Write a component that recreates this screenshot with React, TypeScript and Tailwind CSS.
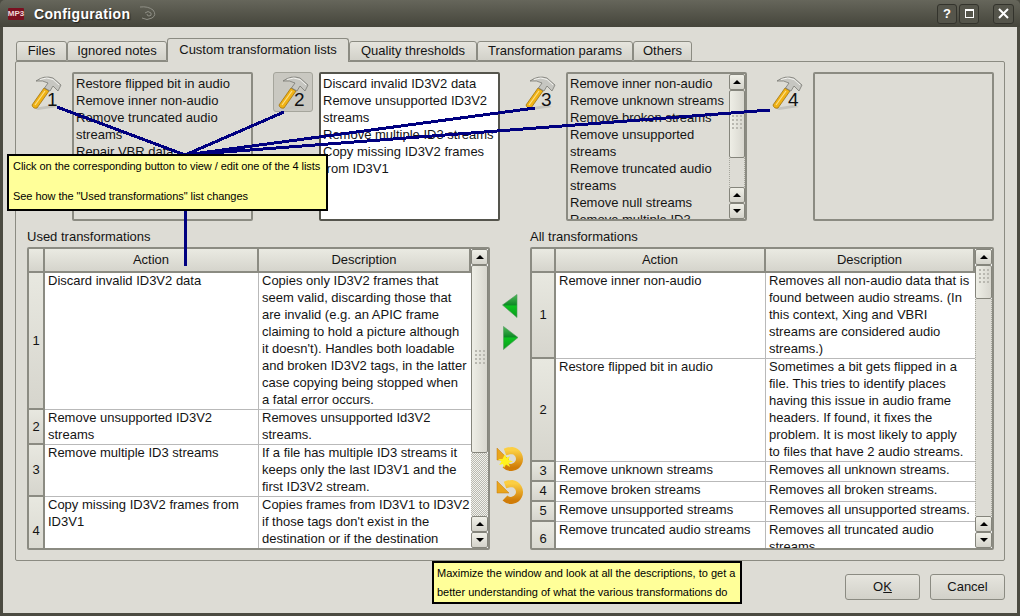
import React from 'react';

type Row = {
  id: number;
  action: string;
  description: string;
  height: number;
};

const usedRows: Row[] = [
  {
    id: 1,
    action: 'Discard invalid ID3V2 data',
    description:
      "Copies only ID3V2 frames that\nseem valid, discarding those that\nare invalid (e.g. an APIC frame\nclaiming to hold a picture although\nit doesn't). Handles both loadable\nand broken ID3V2 tags, in the latter\ncase copying being stopped when\na fatal error occurs.",
    height: 137,
  },
  {
    id: 2,
    action: 'Remove unsupported ID3V2\nstreams',
    description: 'Removes unsupported Id3V2\nstreams.',
    height: 35,
  },
  {
    id: 3,
    action: 'Remove multiple ID3 streams',
    description:
      'If a file has multiple ID3 streams it\nkeeps only the last ID3V1 and the\nfirst ID3V2 stream.',
    height: 52,
  },
  {
    id: 4,
    action: 'Copy missing ID3V2 frames from\nID3V1',
    description:
      "Copies frames from ID3V1 to ID3V2\nif those tags don't exist in the\ndestination or if the destination\nlacks them.",
    height: 70,
  },
];

const allRows: Row[] = [
  {
    id: 1,
    action: 'Remove inner non-audio',
    description:
      'Removes all non-audio data that is\nfound between audio streams. (In\nthis context, Xing and VBRI\nstreams are considered audio\nstreams.)',
    height: 86,
  },
  {
    id: 2,
    action: 'Restore flipped bit in audio',
    description:
      'Sometimes a bit gets flipped in a\nfile. This tries to identify places\nhaving this issue in audio frame\nheaders. If found, it fixes the\nproblem. It is most likely to apply\nto files that have 2 audio streams.',
    height: 103,
  },
  { id: 3, action: 'Remove unknown streams', description: 'Removes all unknown streams.', height: 20 },
  { id: 4, action: 'Remove broken streams', description: 'Removes all broken streams.', height: 20 },
  { id: 5, action: 'Remove unsupported streams', description: 'Removes all unsupported streams.', height: 20 },
  {
    id: 6,
    action: 'Remove truncated audio streams',
    description: 'Removes all truncated audio\nstreams.',
    height: 35,
  },
];

const tabs = [
  { label: 'Files', width: 'w-[51px]' },
  { label: 'Ignored notes', width: 'w-[100px]' },
  { label: 'Custom transformation lists', width: 'w-[182px]', active: true },
  { label: 'Quality thresholds', width: 'w-[128px]' },
  { label: 'Transformation params', width: 'w-[156px]' },
  { label: 'Others', width: 'w-[59px]' },
];

function Hammer({ n }: { n: number }) {
  return (
    <svg width="40" height="40" viewBox="0 0 40 40">
      <path d="M8 36 L26 33 L32 35 L12 38 Z" fill="#c4c3bc" />
      <path d="M6 33 L18 16 L23 19 L11 36 Q7 37 6 33 Z" fill="#f0b215" stroke="#a07410" strokeWidth="0.8" />
      <path d="M9 33 L19 19" stroke="#fbe08a" strokeWidth="1.2" />
      <path
        d="M10 9 Q18 3 27 6 L35 13 L32 19 L27 14 L24 19 L18.5 16 L22 11 Q17 8 10 9 Z"
        fill="#c6c6c1"
        stroke="#6f6f68"
        strokeWidth="0.7"
      />
      <path d="M14 7.5 Q21 4.5 27 7.5 L33 13" stroke="#f4f4f0" strokeWidth="1" fill="none" />
      <text x="21" y="34" fontSize="19" fontFamily="Liberation Sans, sans-serif" fill="#111">
        {n}
      </text>
    </svg>
  );
}

function Refresh({ star }: { star?: boolean }) {
  const id = star ? 'rf-star' : 'rf-plain';
  return (
    <svg width="28" height="27" viewBox="0 0 28 27">
      <defs>
        <linearGradient id={id} x1="0" y1="0" x2="0" y2="1">
          <stop offset="0" stopColor="#fbce42" />
          <stop offset="1" stopColor="#d07c08" />
        </linearGradient>
      </defs>
      <path d="M9 6 Q13 4.5 16 4.5 A8.5 8.5 0 1 1 9 19" fill="none" stroke={`url(#${id})`} strokeWidth="7" />
      <path d="M1 2 L1 14 L13 14 Z" fill="#e9a51c" stroke="#c47a0a" strokeWidth="0.5" />
      {star && (
        <path
          d="M9 8 L10.5 12 L14 10 L12.5 14 L17 15.5 L12.5 17 L14 21 L10 18.5 L8 22 L7 18 L3 19 L5.5 15.5 L2 13 L6.5 13 Z"
          fill="#fff21e"
        />
      )}
    </svg>
  );
}

function GreenArrow({ dir }: { dir: 'left' | 'right' }) {
  const id = dir === 'left' ? 'ga-left' : 'ga-right';
  return (
    <svg width="17" height="24" viewBox="0 0 17 24">
      <defs>
        <linearGradient id={id} x1="0" y1="0" x2="0" y2="1">
          <stop offset="0" stopColor="#4fb85a" />
          <stop offset="0.45" stopColor="#0f8a26" />
          <stop offset="0.5" stopColor="#0cc220" />
          <stop offset="1" stopColor="#0a9a1c" />
        </linearGradient>
      </defs>
      {dir === 'left' ? (
        <path d="M0.5 11 L15 0.5 L15 23.5 Z" fill={`url(#${id})`} stroke="#4f9a5a" strokeWidth="0.6" />
      ) : (
        <path d="M16 11.5 L1.5 0.5 L1.5 23.5 Z" fill={`url(#${id})`} stroke="#4f9a5a" strokeWidth="0.6" />
      )}
    </svg>
  );
}

function ScrollButton({ up }: { up?: boolean }) {
  return (
    <div className="h-[16px] shrink-0 flex items-center justify-center rounded-[2px] border border-[#85857c] bg-gradient-to-b from-[#f0f0e8] to-[#d4d3cb]">
      <div
        className={
          up
            ? 'w-0 h-0 border-x-[4px] border-x-transparent border-b-[4px] border-b-black'
            : 'w-0 h-0 border-x-[4px] border-x-transparent border-t-[4px] border-t-black'
        }
      />
    </div>
  );
}

function Grip() {
  return (
    <div className="grid grid-cols-3 gap-[2px]">
      {Array.from({ length: 12 }).map((_, i) => (
        <div key={i} className="w-[2px] h-[2px] bg-[#b9b8b0]" />
      ))}
    </div>
  );
}

function Scrollbar({
  thumb,
  width,
  dense,
  gripTop,
}: {
  thumb: number;
  width: string;
  dense?: boolean;
  gripTop: number;
}) {
  return (
    <div className={`${width} shrink-0 flex flex-col`}>
      <ScrollButton up />
      <div
        className="shrink-0 flex flex-col items-center rounded-[2px] border border-[#85857c] bg-gradient-to-r from-[#eeeee6] to-[#d8d7cf]"
        style={{ height: thumb, paddingTop: gripTop }}
      >
        <Grip />
      </div>
      <div
        className={
          dense
            ? 'flex-1 bg-[repeating-conic-gradient(#b8b8b0_0_25%,#f2f2ec_0_50%)] bg-[length:2px_2px]'
            : 'flex-1 border-x border-dotted border-[#a5a59c] bg-[#dddcd5]'
        }
      />
      <ScrollButton up />
      <ScrollButton />
    </div>
  );
}

function DataTable({
  rows,
  headerWidth,
  actionWidth,
  descWidth,
  thumb,
  dense,
  gripTop,
}: {
  rows: Row[];
  headerWidth: string;
  actionWidth: string;
  descWidth: string;
  thumb: number;
  dense?: boolean;
  gripTop: number;
}) {
  const headerCell =
    'flex items-center justify-center border-r-2 border-b-2 border-[#8b8b82] bg-gradient-to-b from-[#eaeae2] to-[#d5d4cc]';
  return (
    <div className="h-[303px] flex rounded-[2px] border-2 border-[#8b8b82] bg-white overflow-hidden">
      <div className="flex-1 min-w-0 flex flex-col overflow-hidden">
        <div className="h-[24px] shrink-0 flex">
          <div className={`${headerWidth} ${headerCell}`} />
          <div className={`${actionWidth} ${headerCell}`}>Action</div>
          <div className={`${descWidth} ${headerCell}`}>Description</div>
        </div>
        {rows.map((row) => (
          <div key={row.id} className="shrink-0 flex" style={{ height: row.height }}>
            <div
              className={`${headerWidth} shrink-0 flex items-center justify-center border-r-2 border-b-2 border-[#8b8b82] bg-gradient-to-b from-[#e8e8e0] to-[#d6d5cd]`}
            >
              {row.id}
            </div>
            <div className={`${actionWidth} shrink-0 pl-[3px] border-r border-b border-[#b9b9b9] overflow-hidden`}>
              <div className="-mt-px whitespace-pre leading-[17px]">{row.action}</div>
            </div>
            <div className={`${descWidth} shrink-0 pl-[3px] border-b border-[#b9b9b9] overflow-hidden`}>
              <div className="-mt-px whitespace-pre leading-[17px]">{row.description}</div>
            </div>
          </div>
        ))}
      </div>
      <Scrollbar thumb={thumb} width="w-[17px]" dense={dense} gripTop={gripTop} />
    </div>
  );
}

function ListBox({ lines, white, children }: { lines: string[]; white?: boolean; children?: React.ReactNode }) {
  return (
    <div
      className={
        white
          ? 'w-[181px] h-[149px] flex rounded-[2px] border-2 border-[#55554d] bg-white overflow-hidden'
          : 'w-[181px] h-[149px] flex rounded-[2px] border-2 border-[#8b8b82] overflow-hidden'
      }
    >
      <div className="flex-1 min-w-0 pl-[2px] pt-px leading-[17px] whitespace-pre">
        {lines.map((line) => (
          <div key={line}>{line}</div>
        ))}
      </div>
      {children}
    </div>
  );
}

function App() {
  return (
    <div className="relative w-[1020px] h-[616px] flex flex-col overflow-hidden bg-[#4b4b41] font-['Liberation_Sans',sans-serif] text-[13px] text-[#141414]">
      {/* title bar */}
      <div className="h-[27px] shrink-0 flex items-center pl-[8px] pr-[6px] rounded-t-[5px] bg-gradient-to-b from-[#66665b] to-[#45453b]">
        <div className="w-[16px] h-[12px] flex items-center justify-center rounded-[1px] bg-[#7a1020] text-[8px] leading-none font-bold text-[#f0d8d8]">
          MP3
        </div>
        <div className="ml-[10px] mt-px text-[14px] font-bold tracking-[0.35px] text-white [text-shadow:1px_1px_1px_#222]">
          Configuration
        </div>
        <svg className="ml-[9px]" width="18" height="16" viewBox="0 0 18 16" fill="none" stroke="#8f8f86" strokeWidth="1">
          <path d="M1 1 Q9 0 14 4 Q18 9 13 12 Q8 15 3 12" />
          <path d="M6 7 Q9 4 12 7 Q13 10 10 10 Q8 10 8 8" />
        </svg>
        <div className="flex-1" />
        <div className="flex items-center">
          <div className="w-[20px] h-[20px] flex items-center justify-center rounded-[3px] border border-[#33332c] bg-[#55554b] text-[13px] font-bold text-white">
            ?
          </div>
          <div className="ml-[2px] w-[20px] h-[20px] flex items-center justify-center rounded-[3px] border border-[#33332c] bg-[#55554b]">
            <div className="w-[9px] h-[9px] border border-t-2 border-white" />
          </div>
          <div className="ml-[14px] w-[21px] h-[20px] flex items-center justify-center rounded-[3px] border border-[#33332c] bg-[#55554b]">
            <svg width="11" height="11" viewBox="0 0 11 11" stroke="white" strokeWidth="2">
              <path d="M1 1 L10 10 M10 1 L1 10" />
            </svg>
          </div>
        </div>
      </div>

      {/* window body */}
      <div className="flex-1 mx-[3px] mb-[3px] flex flex-col px-[12px] pt-[11px] bg-[#dddcd5]">
        <div className="h-[23px] shrink-0 flex items-end pl-px">
          {tabs.map((tab) =>
            tab.active ? (
              <div
                key={tab.label}
                className={`${tab.width} h-[24px] -mb-px pb-[2px] z-10 flex items-center justify-center rounded-t-[3px] border border-b-0 border-[#8b8b82] bg-[#dddcd5]`}
              >
                {tab.label}
              </div>
            ) : (
              <div
                key={tab.label}
                className={`${tab.width} h-[20px] flex items-center justify-center rounded-t-[3px] border border-[#8b8b82] bg-gradient-to-b from-[#e6e5de] to-[#d2d1c9]`}
              >
                {tab.label}
              </div>
            ),
          )}
        </div>

        <div className="h-[500px] shrink-0 pl-[10px] pr-[9px] pt-[10px] rounded-[2px] border border-[#8b8b82]">
          <div className="flex">
            <div className="w-[40px] h-[40px] mr-[6px]">
              <Hammer n={1} />
            </div>
            <ListBox
              lines={[
                'Restore flipped bit in audio',
                'Remove inner non-audio',
                'Remove truncated audio',
                'streams',
                'Repair VBR data',
              ]}
            />
            <div className="w-[40px] h-[40px] ml-[20px] mr-[6px] rounded-[3px] border border-[#a5a59c] bg-[#c9c8c1]">
              <div className="-m-px">
                <Hammer n={2} />
              </div>
            </div>
            <ListBox
              white
              lines={[
                'Discard invalid ID3V2 data',
                'Remove unsupported ID3V2',
                'streams',
                'Remove multiple ID3 streams',
                'Copy missing ID3V2 frames',
                'from ID3V1',
              ]}
            />
            <div className="w-[40px] h-[40px] ml-[20px] mr-[6px]">
              <Hammer n={3} />
            </div>
            <ListBox
              lines={[
                'Remove inner non-audio',
                'Remove unknown streams',
                'Remove broken streams',
                'Remove unsupported',
                'streams',
                'Remove truncated audio',
                'streams ',
                'Remove null streams',
                'Remove multiple ID3',
              ]}
            >
              <Scrollbar thumb={68} width="w-[16px]" gripTop={24} />
            </ListBox>
            <div className="w-[40px] h-[40px] ml-[20px] mr-[6px]">
              <Hammer n={4} />
            </div>
            <ListBox lines={[]} />
          </div>

          <div className="flex ml-px mt-[8px]">
            <div className="w-[463px]">
              <div className="h-[18px] leading-[15px]">Used transformations</div>
              <DataTable
                rows={usedRows}
                headerWidth="w-[16px]"
                actionWidth="w-[214px]"
                descWidth="w-[212px]"
                thumb={188}
                dense
                gripTop={84}
              />
            </div>
            <div className="w-[40px] flex flex-col items-center pt-[65px]">
              <GreenArrow dir="left" />
              <div className="mt-[8px]">
                <GreenArrow dir="right" />
              </div>
              <div className="mt-[96px]">
                <Refresh star />
              </div>
              <div className="mt-[6px]">
                <Refresh />
              </div>
            </div>
            <div className="w-[464px]">
              <div className="h-[18px] leading-[15px]">All transformations</div>
              <DataTable
                rows={allRows}
                headerWidth="w-[24px]"
                actionWidth="w-[210px]"
                descWidth="w-[209px]"
                thumb={34}
                gripTop={3}
              />
            </div>
          </div>
        </div>

        <div className="flex justify-end gap-[10px] pt-[13px]">
          <div className="w-[75px] h-[26px] flex items-center justify-center rounded-[3px] border border-[#8b8b82] bg-gradient-to-b from-[#e6e5de] to-[#d2d1c9]">
            <span>
              O<span className="underline">K</span>
            </span>
          </div>
          <div className="w-[75px] h-[26px] flex items-center justify-center rounded-[3px] border border-[#8b8b82] bg-gradient-to-b from-[#e6e5de] to-[#d2d1c9]">
            Cancel
          </div>
        </div>
      </div>

      {/* annotation lines */}
      <svg className="absolute left-0 top-0" width="1020" height="616" shapeRendering="crispEdges" stroke="#000080" strokeWidth="3">
        <path d="M57 107 L185 155" />
        <path d="M284 112 L185 155" />
        <path d="M535 108 L185 155" />
        <path d="M770 110 L185 155" />
        <path d="M185 205 L185 266" />
      </svg>

      {/* annotation notes */}
      <div className="absolute left-[7px] top-[154px] w-[321px] h-[57px] pl-[4px] pt-[3px] border-2 border-black bg-[#ffff99] text-[11px] leading-[15px] tracking-[-0.06px] whitespace-nowrap text-black">
        <div>Click on the corresponding button to view / edit one of the 4 lists</div>
        <div className="mt-[15px]">See how the "Used transformations" list changes</div>
      </div>
      <div className="absolute left-[432px] top-[561px] w-[310px] h-[43px] pl-[3px] pt-px border-2 border-black bg-[#ffff99] text-[11px] leading-[19px] whitespace-nowrap text-black">
        <div>Maximize the window and look at all the descriptions, to get a</div>
        <div>better understanding of what the various transformations do</div>
      </div>
    </div>
  );
}

export default App;
